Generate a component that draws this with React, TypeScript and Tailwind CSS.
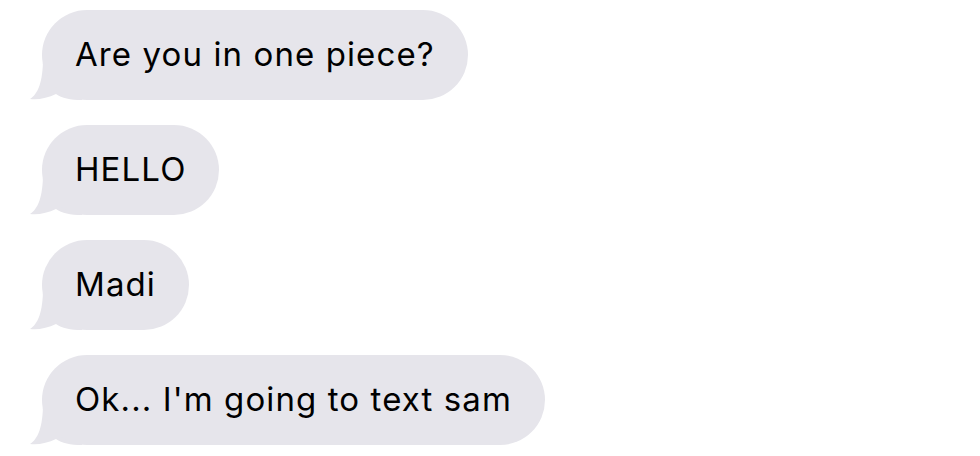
import React from 'react';

const messages = ['Are you in one piece?', 'HELLO', 'Madi', "Ok... I'm going to text sam"];

const Tail = () => (
  <svg
    className="absolute left-[-12px] top-[40px]"
    width="60"
    height="50"
    viewBox="0 0 60 50"
  >
    <path
      d="M13 8 C13 32 8 44 0 49 C8 50 18 48 26 44 C32 48 40 50 52 50 L52 8 Z"
      fill="#e6e5eb"
    />
  </svg>
);

const Bubble: React.FC<{ text: string }> = ({ text }) => (
  <div className="relative">
    <Tail />
    <div className="relative flex h-[90px] items-center rounded-full bg-[#e6e5eb] pl-[33px] pr-[33px] text-[33px] tracking-[1.1px] text-black">
      {text}
    </div>
  </div>
);

export default function App() {
  return (
    <div
      className="flex h-[456px] w-[980px] flex-col items-start gap-[25px] bg-white pl-[42px] pt-[10px]"
      style={{ fontFamily: 'Inter, "Liberation Sans", sans-serif' }}
    >
      {messages.map((m) => (
        <Bubble key={m} text={m} />
      ))}
    </div>
  );
}
